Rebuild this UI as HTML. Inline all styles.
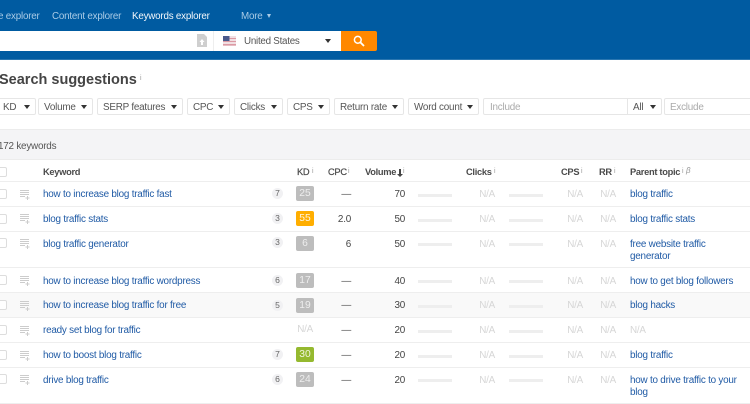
<!DOCTYPE html>
<html><head><meta charset="utf-8"><style>
html,body{margin:0;padding:0;width:750px;height:404px;overflow:hidden;background:#fff}
body{position:relative;font-family:"Liberation Sans",sans-serif;font-size:9.9px;letter-spacing:-.22px;color:#444;filter:blur(.25px)}
.a,.t,.r,.l,.h,.n,.c,.b,.m,.k,.i,.ck,.bar,.ln{position:absolute}
.t,.r,.l,.h,.n{white-space:nowrap;line-height:13px;margin-top:1px}
.r{text-align:right}
.l{color:#1f5aa5}
.h{font-weight:bold;color:#4a4a4a;font-size:9.3px;letter-spacing:-.3px}
.n{color:#d6d6d6;text-align:right}
.ln{left:0;width:750px;height:1px;background:#eee}
.ck{left:-4px;width:9px;height:8px;border:1px solid #ddd;border-radius:2px;background:#fff}
.c{left:272px;width:11px;height:11px;border-radius:50%;background:#f1f1f3;color:#666;font-size:8.5px;line-height:11px;text-align:center;letter-spacing:0}
.k{left:296px;width:18px;height:15px;border-radius:2px;background:#bdbdbd;color:#eee;text-align:center;line-height:15px;font-size:10.3px;letter-spacing:0}
.bar{width:34px;height:3px;background:#eeeeee}
.b{top:98px;height:15px;border:1px solid #e6e6e6;border-radius:2px;line-height:17px;background:#fff;color:#555;padding-left:5px;box-sizing:content-box;white-space:nowrap}
.b i{position:absolute;right:5px;top:6px;width:0;height:0;border-left:3px solid transparent;border-right:3px solid transparent;border-top:4px solid #333}
.i{font-size:7px;color:#999;line-height:8px;font-weight:normal;letter-spacing:0;margin-top:2px}
.dash{color:#555}
svg{position:absolute}
</style></head><body>
<div class="a" style="left:0;top:0;width:750px;height:59px;background:#005ba1"></div>
<div class="a" style="left:0;top:59px;width:750px;height:1px;background:#2a76b0"></div>
<div class="t" style="left:-2px;top:9px;color:#a9cbe6;font-size:9.8px;letter-spacing:-.2px">e explorer</div>
<div class="t" style="left:52px;top:9px;color:#a9cbe6;font-size:9.8px;letter-spacing:-.2px">Content explorer</div>
<div class="t" style="left:132px;top:9px;color:#f2f7fb;font-size:9.8px;letter-spacing:-.2px">Keywords explorer</div>
<div class="t" style="left:241px;top:9px;color:#a9cbe6;font-size:9.8px;letter-spacing:-.2px">More</div>
<div class="a" style="left:267px;top:14px;width:0;height:0;border-left:2.5px solid transparent;border-right:2.5px solid transparent;border-top:4px solid #a9cbe6"></div>

<div class="a" style="left:0;top:31px;width:341px;height:20px;background:#fff"></div>
<div class="a" style="left:213px;top:31px;width:1px;height:20px;background:#eee"></div>
<svg style="left:197px;top:34px" width="10" height="13" viewBox="0 0 10 13"><path d="M0 0H7L10 3V13H0Z" fill="#cfcfcf"/><path d="M5 5L7.5 8H6V11H4V8H2.5Z" fill="#fff"/></svg>
<svg style="left:223px;top:36px" width="13" height="10" viewBox="0 0 13 10"><rect width="13" height="10" fill="#f1dfe2"/><rect y="2" width="13" height="1" fill="#dc9aa4"/><rect y="5" width="13" height="1" fill="#dc9aa4"/><rect y="8" width="13" height="1.5" fill="#dc9aa4"/><rect width="6.5" height="5" fill="#4a5a8c"/></svg>
<div class="t" style="left:244px;top:34px;color:#555;font-size:9.8px;letter-spacing:-.25px">United States</div>
<div class="a" style="left:325px;top:39px;width:0;height:0;border-left:3px solid transparent;border-right:3px solid transparent;border-top:4px solid #333"></div>
<div class="a" style="left:341px;top:31px;width:36px;height:20px;background:#ff8800;border-radius:0 2px 2px 0"></div>
<svg style="left:353px;top:35px" width="12" height="12" viewBox="0 0 12 12"><circle cx="4.8" cy="4.8" r="3.4" fill="none" stroke="#fff" stroke-width="1.5"/><path d="M7.4 7.4L11 11" stroke="#fff" stroke-width="1.8"/></svg>

<div class="t" style="left:-1px;top:70px;font-size:14.5px;letter-spacing:0;font-weight:bold;color:#444;line-height:18px">Search suggestions</div>
<div class="i" style="left:140px;top:73px">i</div>

<div class="b" style="left:-4px;width:32px;padding-left:6px">KD<i></i></div>
<div class="b" style="left:38px;width:48px;padding-left:5px">Volume<i></i></div>
<div class="b" style="left:97px;width:79px">SERP features<i></i></div>
<div class="b" style="left:187px;width:36px">CPC<i></i></div>
<div class="b" style="left:234px;width:42px">Clicks<i></i></div>
<div class="b" style="left:287px;width:36px">CPS<i></i></div>
<div class="b" style="left:334px;width:63px">Return rate<i></i></div>
<div class="b" style="left:408px;width:64px">Word count<i></i></div>
<div class="b" style="left:483px;width:138px;color:#aaa;padding-left:6px">Include</div>
<div class="b" style="left:627px;width:28px;padding-left:5px;border-radius:0 2px 2px 0">All<i></i></div>
<div class="b" style="left:664px;width:90px;color:#aaa">Exclude</div>

<div class="a" style="left:0;top:129px;width:750px;height:31px;background:#f4f4f6;border-top:1px solid #ececec;border-bottom:1px solid #ececec;box-sizing:border-box"></div>
<div class="t" style="left:-2px;top:139px;color:#555">172 keywords</div>

<div class="a" style="left:0;top:292px;width:750px;height:25px;background:#f9f9f9"></div>
<div class="ln" style="top:181px"></div><div class="ln" style="top:206px"></div><div class="ln" style="top:231px"></div><div class="ln" style="top:267px"></div><div class="ln" style="top:292px"></div><div class="ln" style="top:317px"></div><div class="ln" style="top:342px"></div><div class="ln" style="top:367px"></div><div class="ln" style="top:403px"></div>

<div class="ck" style="top:167px"></div>
<div class="h" style="left:43px;top:165px">Keyword</div>
<div class="h" style="left:297px;top:165px;font-weight:normal;-webkit-text-stroke:.2px #4a4a4a">KD</div><div class="i" style="left:312px;top:166px">i</div>
<div class="h" style="left:328px;top:165px;font-weight:normal;-webkit-text-stroke:.2px #4a4a4a">CPC</div><div class="i" style="left:348px;top:166px">i</div>
<div class="h" style="left:365px;top:165px">Volume</div>
<svg style="left:397px;top:169px" width="6" height="8" viewBox="0 0 6 8"><path d="M2 0H4V5H6L3 8L0 5H2Z" fill="#444"/></svg>
<div class="i" style="left:403px;top:166px">i</div>
<div class="h" style="left:466px;top:165px">Clicks</div><div class="i" style="left:494px;top:166px">i</div>
<div class="h" style="left:561px;top:165px">CPS</div><div class="i" style="left:581px;top:166px">i</div>
<div class="h" style="left:599px;top:165px">RR</div><div class="i" style="left:614px;top:166px">i</div>
<div class="h" style="left:630px;top:165px">Parent topic</div><div class="i" style="left:682px;top:166px">i</div>
<div class="i" style="left:686px;top:165px;font-style:italic;font-size:8px">β</div>

<!-- row 1 -->
<div class="ck" style="top:189px"></div>
<svg style="left:20px;top:190px" width="10" height="10" viewBox="0 0 10 10"><path d="M0 .5H9M0 2.5H9M0 4.5H9M0 6.5H5M7.5 6V10M5.5 8H9.5" stroke="#cccccc" stroke-width="1" fill="none"/></svg>
<div class="l" style="left:43px;top:187px">how to increase blog traffic fast</div>
<div class="c" style="top:188px">7</div><div class="k" style="top:186px">25</div>
<div class="r dash" style="right:399px;top:187px">—</div>
<div class="r" style="right:345px;top:187px">70</div><div class="bar" style="left:418px;top:194px"></div>
<div class="n" style="right:255px;top:187px">N/A</div><div class="bar" style="left:509px;top:194px"></div>
<div class="n" style="right:167px;top:187px">N/A</div><div class="n" style="right:134px;top:187px">N/A</div>
<div class="l" style="left:630px;top:187px">blog traffic</div>

<!-- row 2 -->
<div class="ck" style="top:214px"></div>
<svg style="left:20px;top:214px" width="10" height="10" viewBox="0 0 10 10"><path d="M0 .5H9M0 2.5H9M0 4.5H9M0 6.5H5M7.5 6V10M5.5 8H9.5" stroke="#cccccc" stroke-width="1" fill="none"/></svg>
<div class="l" style="left:43px;top:212px">blog traffic stats</div>
<div class="c" style="top:213px">3</div><div class="k" style="top:211px;background:#ffae00;color:#fff4dc">55</div>
<div class="r" style="right:399px;top:212px">2.0</div>
<div class="r" style="right:345px;top:212px">50</div><div class="bar" style="left:418px;top:219px"></div>
<div class="n" style="right:255px;top:212px">N/A</div><div class="bar" style="left:509px;top:219px"></div>
<div class="n" style="right:167px;top:212px">N/A</div><div class="n" style="right:134px;top:212px">N/A</div>
<div class="l" style="left:630px;top:212px">blog traffic stats</div>

<!-- row 3 -->
<div class="ck" style="top:238px"></div>
<svg style="left:20px;top:239px" width="10" height="10" viewBox="0 0 10 10"><path d="M0 .5H9M0 2.5H9M0 4.5H9M0 6.5H5M7.5 6V10M5.5 8H9.5" stroke="#cccccc" stroke-width="1" fill="none"/></svg>
<div class="l" style="left:43px;top:237px">blog traffic generator</div>
<div class="c" style="top:237px">3</div><div class="k" style="top:236px">6</div>
<div class="r" style="right:399px;top:237px">6</div>
<div class="r" style="right:345px;top:237px">50</div><div class="bar" style="left:418px;top:243px"></div>
<div class="n" style="right:255px;top:237px">N/A</div><div class="bar" style="left:509px;top:243px"></div>
<div class="n" style="right:167px;top:237px">N/A</div><div class="n" style="right:134px;top:237px">N/A</div>
<div class="l" style="left:630px;top:237px">free website traffic</div>
<div class="l" style="left:630px;top:249px">generator</div>

<!-- row 4 -->
<div class="ck" style="top:275px"></div>
<svg style="left:20px;top:276px" width="10" height="10" viewBox="0 0 10 10"><path d="M0 .5H9M0 2.5H9M0 4.5H9M0 6.5H5M7.5 6V10M5.5 8H9.5" stroke="#cccccc" stroke-width="1" fill="none"/></svg>
<div class="l" style="left:43px;top:274px">how to increase blog traffic wordpress</div>
<div class="c" style="top:275px">6</div><div class="k" style="top:273px">17</div>
<div class="r dash" style="right:399px;top:274px">—</div>
<div class="r" style="right:345px;top:274px">40</div><div class="bar" style="left:418px;top:280px"></div>
<div class="n" style="right:255px;top:274px">N/A</div><div class="bar" style="left:509px;top:280px"></div>
<div class="n" style="right:167px;top:274px">N/A</div><div class="n" style="right:134px;top:274px">N/A</div>
<div class="l" style="left:630px;top:274px">how to get blog followers</div>

<!-- row 5 -->
<div class="ck" style="top:300px"></div>
<svg style="left:20px;top:301px" width="10" height="10" viewBox="0 0 10 10"><path d="M0 .5H9M0 2.5H9M0 4.5H9M0 6.5H5M7.5 6V10M5.5 8H9.5" stroke="#cccccc" stroke-width="1" fill="none"/></svg>
<div class="l" style="left:43px;top:298px">how to increase blog traffic for free</div>
<div class="c" style="top:300px">5</div><div class="k" style="top:298px">19</div>
<div class="r dash" style="right:399px;top:298px">—</div>
<div class="r" style="right:345px;top:298px">30</div><div class="bar" style="left:418px;top:305px"></div>
<div class="n" style="right:255px;top:298px">N/A</div><div class="bar" style="left:509px;top:305px"></div>
<div class="n" style="right:167px;top:298px">N/A</div><div class="n" style="right:134px;top:298px">N/A</div>
<div class="l" style="left:630px;top:298px">blog hacks</div>

<!-- row 6 -->
<div class="ck" style="top:325px"></div>
<svg style="left:20px;top:326px" width="10" height="10" viewBox="0 0 10 10"><path d="M0 .5H9M0 2.5H9M0 4.5H9M0 6.5H5M7.5 6V10M5.5 8H9.5" stroke="#cccccc" stroke-width="1" fill="none"/></svg>
<div class="l" style="left:43px;top:323px">ready set blog for traffic</div>
<div class="n" style="right:437px;top:322px">N/A</div>
<div class="r dash" style="right:399px;top:323px">—</div>
<div class="r" style="right:345px;top:323px">20</div><div class="bar" style="left:418px;top:330px"></div>
<div class="n" style="right:255px;top:323px">N/A</div><div class="bar" style="left:509px;top:330px"></div>
<div class="n" style="right:167px;top:323px">N/A</div><div class="n" style="right:134px;top:323px">N/A</div>
<div class="n" style="left:630px;top:323px;text-align:left">N/A</div>

<!-- row 7 -->
<div class="ck" style="top:350px"></div>
<svg style="left:20px;top:351px" width="10" height="10" viewBox="0 0 10 10"><path d="M0 .5H9M0 2.5H9M0 4.5H9M0 6.5H5M7.5 6V10M5.5 8H9.5" stroke="#cccccc" stroke-width="1" fill="none"/></svg>
<div class="l" style="left:43px;top:348px">how to boost blog traffic</div>
<div class="c" style="top:349px">7</div><div class="k" style="top:347px;background:#95b92f;color:#f0f5dd">30</div>
<div class="r dash" style="right:399px;top:348px">—</div>
<div class="r" style="right:345px;top:348px">20</div><div class="bar" style="left:418px;top:355px"></div>
<div class="n" style="right:255px;top:348px">N/A</div><div class="bar" style="left:509px;top:355px"></div>
<div class="n" style="right:167px;top:348px">N/A</div><div class="n" style="right:134px;top:348px">N/A</div>
<div class="l" style="left:630px;top:348px">blog traffic</div>

<!-- row 8 -->
<div class="ck" style="top:374px"></div>
<svg style="left:20px;top:375px" width="10" height="10" viewBox="0 0 10 10"><path d="M0 .5H9M0 2.5H9M0 4.5H9M0 6.5H5M7.5 6V10M5.5 8H9.5" stroke="#cccccc" stroke-width="1" fill="none"/></svg>
<div class="l" style="left:43px;top:373px">drive blog traffic</div>
<div class="c" style="top:374px">6</div><div class="k" style="top:372px">24</div>
<div class="r dash" style="right:399px;top:373px">—</div>
<div class="r" style="right:345px;top:373px">20</div><div class="bar" style="left:418px;top:379px"></div>
<div class="n" style="right:255px;top:373px">N/A</div><div class="bar" style="left:509px;top:379px"></div>
<div class="n" style="right:167px;top:373px">N/A</div><div class="n" style="right:134px;top:373px">N/A</div>
<div class="l" style="left:630px;top:373px">how to drive traffic to your</div>
<div class="l" style="left:630px;top:385px">blog</div>
</body></html>
